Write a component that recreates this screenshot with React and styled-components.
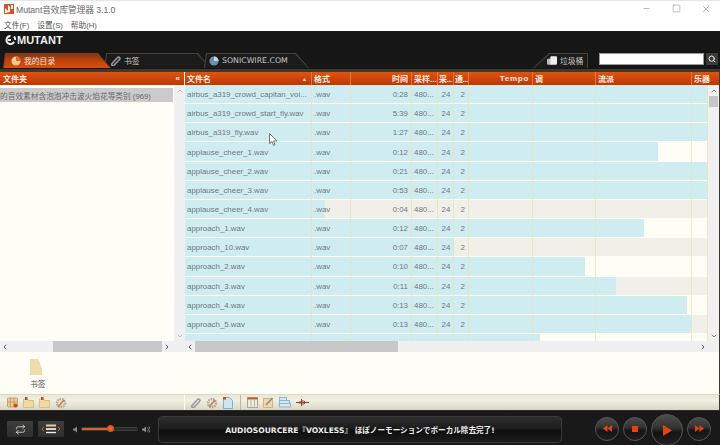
import React from 'react';
import styled, { createGlobalStyle } from 'styled-components';
import { ChevronUp, ChevronDown, ChevronLeft, ChevronRight, Minus, Square, X, Search, Repeat } from 'lucide-react';

const Global = createGlobalStyle`
  html, body { margin: 0; padding: 0; background: #191919; }
  * { box-sizing: border-box; }
`;

const UI = `"DejaVu Sans", "Noto Sans CJK SC", sans-serif`;
const NARROW = `"Liberation Sans", "Noto Sans CJK SC", sans-serif`;
const COLS = '127px 39px 61px 26px 16px 15px 64px 63px 96px 16px';
const HEAD_COLS = '127px 39px 61px 26px 16px 15px 64px 63px 96px 1fr';

const Page = styled.div`
  position: relative;
  width: 720px;
  height: 445px;
  overflow: hidden;
  display: flex;
  flex-direction: column;
  font-family: ${UI};
  background: #fefef6;
`;

const TitleBar = styled.div`
  height: 18px;
  flex: none;
  display: flex;
  align-items: center;
  padding: 0 0 2px 4px;
  gap: 2px;
  background: #fff;
  border-top: 1px solid #e6e6e6;
  color: #666;
`;

const TitleText = styled.span`
  flex: 1;
  font-family: ${NARROW};
  font-size: 8.6px;
`;

const WinButtons = styled.div`
  display: flex;
  margin-right: -1px;
  color: #555;
`;

const WinButton = styled.span`
  width: 30px;
  display: flex;
  justify-content: center;
`;

const MenuBar = styled.div`
  height: 13px;
  flex: none;
  display: flex;
  gap: 8px;
  padding-left: 4px;
  align-items: center;
  background: #fff;
  font-family: ${NARROW};
  font-size: 7.7px;
  color: #555;
`;

const Header = styled.div`
  height: 41px;
  flex: none;
  display: flex;
  flex-direction: column;
  background: #161616;
  border-bottom: 3px solid #3d3a2b;
`;

const Brand = styled.div`
  height: 22px;
  flex: none;
  display: flex;
  align-items: center;
  gap: 1px;
  padding: 0 0 4px 5px;
  color: #eee;
  font-family: "Liberation Sans", sans-serif;
  font-weight: 700;
  font-size: 11px;
`;

const TabStrip = styled.div`
  height: 15px;
  display: flex;
  align-items: stretch;
  padding-left: 3px;
`;

const Tab = styled.div`
  position: relative;
  width: ${p => p.$w}px;
  margin-right: -7px;
  display: flex;
  align-items: center;
  gap: 3px;
  padding-left: ${p => p.$pad}px;
  font-size: 7.8px;
  color: ${p => p.$active ? '#f4e3d6' : '#c8c8c8'};
  z-index: ${p => p.$active ? 2 : 1};
  &::before, &::after {
    content: '';
    position: absolute;
    z-index: -1;
    clip-path: polygon(0 100%, 2px 0, calc(100% - 13px) 0, 100% 100%);
  }
  &::before {
    inset: 0;
    background: ${p => p.$active ? '#8a3a12' : '#44443c'};
  }
  &::after {
    inset: 1px 1px 0;
    background: ${p => p.$active ? 'linear-gradient(#7c3a1a, #c8430a 55%, #d94e0c)' : '#1b1b1b'};
  }
`;

const Spacer = styled.div`
  flex: 1;
`;

const TrashTab = styled.div`
  position: relative;
  width: 55px;
  margin-right: 11px;
  display: flex;
  align-items: center;
  gap: 3px;
  padding-left: 14px;
  font-size: 7.8px;
  white-space: nowrap;
  color: #c8c8c8;
  &::before, &::after {
    content: '';
    position: absolute;
    z-index: 0;
    clip-path: polygon(0 100%, 16px 0, 100% 0, 100% 100%);
  }
  &::before { inset: 0; background: #44443c; }
  &::after { inset: 1px 1px 0 1px; background: #1b1b1b; }
  & > * { position: relative; z-index: 1; }
`;

const SearchBox = styled.div`
  display: flex;
  gap: 2px;
  height: 12px;
  margin: 0 2px 0 0;
`;

const SearchInput = styled.div`
  width: 105px;
  background: #fff;
  border: 1px solid #999;
`;

const SearchButton = styled.div`
  width: 12px;
  background: #3a3a38;
  color: #eee;
  display: flex;
  align-items: center;
  justify-content: center;
`;

const Workspace = styled.div`
  height: 280px;
  flex: none;
  display: grid;
  grid-template-columns: 185px 1fr;
  grid-template-rows: 13px 256px 11px;
  border-right: 1px solid #3d3a2b;
`;

const OrangeHead = styled.div`
  background: linear-gradient(#dd5414, #c93f06 70%, #bd3803);
  color: #fdeee2;
  font-family: ${NARROW};
  font-size: 8px;
  font-weight: 700;
`;

const FolderHead = styled(OrangeHead)`
  display: flex;
  justify-content: space-between;
  align-items: center;
  padding: 0 4px 0 3px;
  margin-right: 1px;
`;

const ListHead = styled(OrangeHead)`
  display: grid;
  grid-template-columns: ${HEAD_COLS};
`;

const HeadCell = styled.div`
  display: flex;
  align-items: center;
  justify-content: ${p => p.$right ? 'flex-end' : 'space-between'};
  padding: 0 ${p => p.$right ? '3px' : '0'} 0 2px;
  border-right: 1px solid #e27a3c;
  overflow: hidden;
  white-space: nowrap;
`;

const ShortCell = styled(HeadCell)`
  padding-left: 1px;
  letter-spacing: -0.5px;
`;

const TempoCell = styled(HeadCell)`
  letter-spacing: 0.7px;
`;

const LastCell = styled(HeadCell)`
  border-right: none;
`;

const SortMark = styled.span`
  font-size: 5px;
  margin-right: 4px;
`;

const FolderBody = styled.div`
  display: flex;
  background: #fefef6;
`;

const FolderList = styled.div`
  flex: 1;
  overflow: hidden;
  padding: 3px 1px 0 0;
`;

const FolderItem = styled.div`
  height: 14px;
  display: flex;
  align-items: center;
  background: #cbcbc9;
  color: #6a6a6a;
  font-family: ${NARROW};
  font-size: 7.7px;
  white-space: nowrap;
  overflow: hidden;
`;

const ListBody = styled.div`
  display: flex;
  overflow: hidden;
`;

const Rows = styled.div`
  width: 523px;
  height: 256px;
  overflow: hidden;
  background: #fefef6;
`;

const Row = styled.div`
  position: relative;
  height: 19.17px;
  display: grid;
  grid-template-columns: ${COLS};
  font-family: "Liberation Sans", sans-serif;
  font-size: 7.9px;
  color: #6f797e;
`;

const Track = styled.div`
  position: absolute;
  inset: 0 0 1px 0;
  background: ${p => p.$odd ? '#fefef6' : '#f1f0e8'};
`;

const Fill = styled.div`
  height: 100%;
  background: #cfecf1;
`;

const Cell = styled.div`
  position: relative;
  display: flex;
  align-items: center;
  justify-content: ${p => p.$align || 'flex-start'};
  padding: 0 ${p => p.$align === 'flex-end' ? '3px' : '1px'} 0 2px;
  border-right: 1px solid rgba(232, 226, 190, 0.75);
  white-space: nowrap;
  overflow: hidden;
`;

const VBar = styled.div`
  width: 11px;
  flex: none;
  display: flex;
  flex-direction: column;
  align-items: center;
  background: #f0f0f0;
  color: #777;
`;

const ArrowBox = styled.div`
  height: 11px;
  flex: none;
  display: flex;
  align-items: center;
  justify-content: center;
`;

const VThumb = styled.div`
  width: 9px;
  height: 11px;
  background: #c6c6c6;
`;

const HBar = styled.div`
  display: flex;
  align-items: stretch;
  background: #f0f0f0;
  color: #555;
`;

const HArrow = styled.div`
  width: 10px;
  flex: none;
  display: flex;
  align-items: center;
  justify-content: center;
  margin-right: ${p => p.$end || 0}px;
`;

const HThumb = styled.div`
  height: 100%;
  width: ${p => p.$w}px;
  margin-left: ${p => p.$at}px;
  background: #c8c8c8;
`;

const Bookmarks = styled.div`
  height: 42px;
  flex: none;
  padding: 7px 0 0 30px;
  background: #fefef6;
  border-right: 1px solid #3d3a2b;
  display: flex;
  flex-direction: column;
  align-items: flex-start;
  font-size: 7.8px;
  color: #555;
  line-height: 10px;
`;

const FolderIcon = styled.div`
  width: 12px;
  height: 16px;
  margin-bottom: 5px;
  background: #eedcaa;
  clip-path: polygon(0 0, 70% 0, 100% 60%, 100% 100%, 0 100%);
`;

const Tools = styled.div`
  height: 16px;
  flex: none;
  display: flex;
  align-items: center;
  background: linear-gradient(#e9e7d6, #f2f0e3 35%, #d9d6c3);
  border-top: 1px solid #dcd9c6;
  border-right: 1px solid #3d3a2b;
`;

const ToolGroup = styled.div`
  width: ${p => p.$w}px;
  height: 100%;
  flex: none;
  display: flex;
  align-items: center;
  gap: ${p => p.$gap || 0}px;
  padding-left: ${p => p.$pad}px;
  border-right: ${p => p.$line ? `1px solid ${p.$line}` : 'none'};
`;

const Player = styled.div`
  height: 35px;
  flex: none;
  display: flex;
  align-items: center;
  padding-left: 7px;
  background: #191919;
  border-top: 1px solid #2d2b22;
`;

const PlayerButton = styled.div`
  width: 26px;
  height: 16px;
  margin: 2px 5px 0 0;
  border-radius: 1px;
  background: linear-gradient(#3e3e3c, #2e2e2c);
  display: flex;
  align-items: center;
  justify-content: center;
  color: #eee;
`;

const Volume = styled.div`
  display: flex;
  align-items: center;
  gap: 4px;
  margin: 2px 0 0 4px;
  color: #777;
`;

const Slider = styled.div`
  position: relative;
  width: 57px;
  height: 4px;
  background: #2c2c2a;
  border: 1px solid #3c3c3a;
  border-radius: 2px;
`;

const SliderFill = styled.div`
  height: 100%;
  background: #d9602a;
`;

const SliderThumb = styled.div`
  position: absolute;
  top: -3px;
  width: 7px;
  height: 7px;
  margin-left: -4px;
  border-radius: 50%;
  background: radial-gradient(#f07030, #c8400a);
`;

const Ticker = styled.div`
  width: 404px;
  height: 27px;
  margin: 2px 0 0 8px;
  flex: none;
  display: flex;
  align-items: center;
  justify-content: center;
  border: 1px solid #3a3a3a;
  border-radius: 4px;
  background: linear-gradient(#2e2e2e, #1c1c1c 45%, #0e0e0e 55%, #1c1c1c);
  color: #eee;
  font-family: "DejaVu Sans", "Noto Sans CJK JP", sans-serif;
  font-size: 7.6px;
  font-weight: 700;
  white-space: nowrap;
`;

const Transport = styled.div`
  display: flex;
  align-items: center;
  gap: 4px;
  margin: 1px 0 0 33px;
`;

const Round = styled.div`
  width: ${p => p.$big ? 32 : 24}px;
  height: ${p => p.$big ? 32 : 24}px;
  margin-bottom: ${p => p.$big ? '-3px' : '0'};
  flex: none;
  border-radius: 50%;
  border: 1px solid #555;
  background: linear-gradient(#4c4c4a, #333331 42%, #141414 58%, #202020);
  display: flex;
  align-items: center;
  justify-content: center;
`;

const Pointer = styled.svg`
  position: absolute;
  left: 269px;
  top: 133px;
`;

const BrandMark = () => (
  <svg width="11" height="10" viewBox="0 0 11 10">
    <path d="M5.5 1a4 4 0 1 0 3.6 5.8M3 5h3M9 1.5A4 4 0 0 1 10 5" fill="none" stroke="#eee" strokeWidth="2" />
  </svg>
);

const AppIcon = () => (
  <svg width="10" height="10" viewBox="0 0 10 10">
    <rect width="10" height="10" fill="#d9532a" />
    <path d="M1 9V4l3 3V1l2 2v5M7 1h2v4H7z" fill="#fff" />
  </svg>
);

const Ball = ({ c1, c2 }) => (
  <svg width="10" height="10" viewBox="0 0 11 11">
    <circle cx="5.5" cy="5.5" r="5" fill={c1} />
    <path d="M5.5 .5a5 5 0 0 1 5 5H5.5z" fill={c2} />
  </svg>
);

const Clip = ({ color = '#999' }) => (
  <svg width="11" height="11" viewBox="0 0 11 11">
    <path d="M2 8.5 7.5 2.5a1.4 1.4 0 0 1 2 2L4 10.2a1 1 0 0 1-2-1.6" fill="none" stroke={color} strokeWidth="1.6" />
  </svg>
);

const Cubes = () => (
  <svg width="10" height="9" viewBox="0 0 12 10">
    <rect x="0" y="3" width="6" height="7" rx="1" fill="#bbb" />
    <rect x="4" y="0" width="8" height="10" rx="1" fill="#eee" />
  </svg>
);

const BoxIcon = () => (
  <svg width="11" height="11" viewBox="0 0 11 11">
    <rect x="0.5" y="1" width="10" height="9" rx="1" fill="#e8cf9d" stroke="#bda57a" />
    <path d="M3.5 1v9M7 1v9M1 5h9" stroke="#d99a5b" />
    <circle cx="8.5" cy="8.5" r="2" fill="#d8481b" />
  </svg>
);

const SmallFolder = ({ mark }) => (
  <svg width="11" height="11" viewBox="0 0 11 11">
    <path d="M.5 2h4l1 1.5h5V10.5H.5z" fill="#eed9a6" stroke="#d8c08c" />
    <rect x="2" y="0" width="2.5" height="3" fill={mark} />
  </svg>
);

const GearPen = () => (
  <svg width="12" height="12" viewBox="0 0 12 12">
    <circle cx="6" cy="6" r="4" fill="none" stroke="#aaa" strokeWidth="2.4" strokeDasharray="1.6 .8" />
    <circle cx="6" cy="6" r="2" fill="#ddd" />
    <path d="M3 10 9 3" stroke="#d87c3c" strokeWidth="1.6" />
  </svg>
);

const Doc = () => (
  <svg width="10" height="12" viewBox="0 0 10 12">
    <path d="M.5.5h6l3 3v8H.5z" fill="#cfe6f2" stroke="#7fb0cf" />
    <rect x="0" y="0" width="3" height="2.5" fill="#d8481b" />
  </svg>
);

const TableIcon = () => (
  <svg width="11" height="11" viewBox="0 0 11 11">
    <rect x="0.5" y="0.5" width="10" height="10" fill="#eeeadb" stroke="#aaa69a" />
    <rect x="0.5" y="0.5" width="10" height="2" fill="#cf5a30" />
    <path d="M4 3v7M7.5 3v7" stroke="#bbb" />
  </svg>
);

const NoteIcon = () => (
  <svg width="11" height="11" viewBox="0 0 11 11">
    <rect x="0.5" y="1.5" width="9" height="9" fill="#efd8a6" stroke="#d0b57e" />
    <path d="M3 8 9.5 1" stroke="#8d8d8d" strokeWidth="1.6" />
  </svg>
);

const LinesIcon = () => (
  <svg width="12" height="11" viewBox="0 0 12 11">
    <rect x="0.5" y="0.5" width="7" height="3" fill="#d5e7f0" stroke="#8db6d0" />
    <rect x="0.5" y="3.5" width="10" height="3" fill="#d5e7f0" stroke="#8db6d0" />
    <rect x="0.5" y="6.5" width="11" height="3.5" fill="#d5e7f0" stroke="#8db6d0" />
  </svg>
);

const WaveIcon = () => (
  <svg width="13" height="9" viewBox="0 0 13 9">
    <path d="M0 4.5h13" stroke="#555" />
    <path d="M4 3v3M5.5 1v7M7 2v5M8.5 3v3" stroke="#b8381a" />
  </svg>
);

const LinesButton = () => (
  <svg width="18" height="10" viewBox="0 0 18 10">
    <path d="M4 1.5h10" stroke="#eec9a6" strokeWidth="2" />
    <path d="M4 5h10" stroke="#d8d4c8" strokeWidth="2" />
    <path d="M4 8.5h10" stroke="#eee" strokeWidth="1.4" />
    <path d="M2 3 0 5l2 2M16 3l2 2-2 2" fill="none" stroke="#a86a46" />
  </svg>
);

const Speaker = ({ loud }) => (
  <svg width={loud ? 8 : 4} height="7" viewBox={loud ? '0 0 8 7' : '0 0 4 7'}>
    <path d="M0 2.5h1.5L4 .5v6L1.5 4.5H0z" fill="#8a8a8a" />
    {loud && <path d="M5.5 1.5a3 3 0 0 1 0 4M7 .5a4.5 4.5 0 0 1 0 6" fill="none" stroke="#8a8a8a" />}
  </svg>
);

const Orange = ({ d, w = 9, h = 7 }) => (
  <svg width={w} height={h} viewBox={`0 0 ${w} ${h}`}>
    <path d={d} fill="#e0460b" />
  </svg>
);

const FILES = [
  ['airbus_a319_crowd_capitan_voi...', '0:28', 100],
  ['airbus_a319_crowd_start_fly.wav', '5:39', 100],
  ['airbus_a319_fly.wav', '1:27', 100],
  ['applause_cheer_1.wav', '0:12', 473],
  ['applause_cheer_2.wav', '0:21', 100],
  ['applause_cheer_3.wav', '0:53', 100],
  ['applause_cheer_4.wav', '0:04', 140],
  ['approach_1.wav', '0:12', 459],
  ['approach_10.wav', '0:07', 269],
  ['approach_2.wav', '0:10', 400],
  ['approach_3.wav', '0:11', 431],
  ['approach_4.wav', '0:13', 502],
  ['approach_5.wav', '0:13', 506],
  ['approach_6.wav', '0:08', 355],
];

export default function App() {
  return (
    <Page>
      <Global />
      <TitleBar>
        <AppIcon />
        <TitleText>Mutant音效库管理器 3.1.0</TitleText>
        <WinButtons>
          <WinButton><Minus size={9} strokeWidth={1} /></WinButton>
          <WinButton><Square size={9} strokeWidth={1} /></WinButton>
          <WinButton><X size={10} strokeWidth={1} /></WinButton>
        </WinButtons>
      </TitleBar>
      <MenuBar>
        <span>文件(F)</span>
        <span>设置(S)</span>
        <span>帮助(H)</span>
      </MenuBar>
      <Header>
        <Brand><BrandMark />MUTANT</Brand>
        <TabStrip>
          <Tab $active $w={108} $pad={8}><Ball c1="#f0c890" c2="#d8702c" />我的目录</Tab>
          <Tab $w={107} $pad={6}><Clip />书签</Tab>
          <Tab $w={105} $pad={5}><Ball c1="#6d8eb0" c2="#c9d4dc" />SONICWIRE.COM</Tab>
          <Spacer />
          <TrashTab><Cubes /><span>垃圾桶</span></TrashTab>
          <SearchBox>
            <SearchInput />
            <SearchButton><Search size={8} strokeWidth={3} /></SearchButton>
          </SearchBox>
        </TabStrip>
      </Header>
      <Workspace>
        <FolderHead><span>文件夹</span><span>«</span></FolderHead>
        <ListHead>
          <HeadCell>文件名<SortMark>▲</SortMark></HeadCell>
          <HeadCell>格式</HeadCell>
          <HeadCell $right>时间</HeadCell>
          <HeadCell>采样...</HeadCell>
          <ShortCell>采...</ShortCell>
          <ShortCell>通...</ShortCell>
          <TempoCell $right>Tempo</TempoCell>
          <HeadCell>调</HeadCell>
          <HeadCell>流派</HeadCell>
          <LastCell>乐器</LastCell>
        </ListHead>
        <FolderBody>
          <FolderList>
            <FolderItem>的音效素材含泡泡冲击波火焰花等类别 (969)</FolderItem>
          </FolderList>
          <VBar>
            <ArrowBox><ChevronUp size={8} strokeWidth={3} color="#bbb" /></ArrowBox>
            <Spacer />
            <ArrowBox><ChevronDown size={8} strokeWidth={3} color="#bbb" /></ArrowBox>
          </VBar>
        </FolderBody>
        <ListBody>
          <Rows>
            {FILES.map(([name, time, width], i) => (
              <Row key={name}>
                <Track $odd={i % 2 === 1}>
                  <Fill style={{ width: width === 100 ? '100%' : width }} />
                </Track>
                <Cell>{name}</Cell>
                <Cell>.wav</Cell>
                <Cell $align="flex-end">{time}</Cell>
                <Cell>480...</Cell>
                <Cell $align="center">24</Cell>
                <Cell $align="flex-end">2</Cell>
                <Cell />
                <Cell />
                <Cell />
                <Cell />
              </Row>
            ))}
          </Rows>
          <VBar>
            <ArrowBox><ChevronUp size={8} strokeWidth={3} /></ArrowBox>
            <VThumb />
            <Spacer />
            <ArrowBox><ChevronDown size={8} strokeWidth={3} /></ArrowBox>
          </VBar>
        </ListBody>
        <HBar>
          <HArrow><ChevronLeft size={8} strokeWidth={3} /></HArrow>
          <HThumb $w={109} $at={43} />
          <HArrow><ChevronRight size={8} strokeWidth={3} /></HArrow>
        </HBar>
        <HBar>
          <HArrow><ChevronLeft size={8} strokeWidth={3} /></HArrow>
          <HThumb $w={203} $at={0} />
          <Spacer />
          <HArrow $end={11}><ChevronRight size={8} strokeWidth={3} /></HArrow>
        </HBar>
      </Workspace>
      <Bookmarks>
        <FolderIcon />
        <span>书签</span>
      </Bookmarks>
      <Tools>
        <ToolGroup $w={185} $pad={7} $gap={5} $line="#fff">
          <BoxIcon />
          <SmallFolder mark="#7a6a44" />
          <SmallFolder mark="#d8481b" />
          <GearPen />
        </ToolGroup>
        <ToolGroup $w={56} $pad={5} $gap={5} $line="#bbb8a6">
          <Clip />
          <GearPen />
          <Doc />
        </ToolGroup>
        <ToolGroup $w={80} $pad={6} $gap={5}>
          <TableIcon />
          <NoteIcon />
          <LinesIcon />
          <WaveIcon />
        </ToolGroup>
      </Tools>
      <Player>
        <PlayerButton><Repeat size={11} strokeWidth={1.6} /></PlayerButton>
        <PlayerButton><LinesButton /></PlayerButton>
        <Volume>
          <Speaker />
          <Slider>
            <SliderFill style={{ width: '52%' }} />
            <SliderThumb style={{ left: '52%' }} />
          </Slider>
          <Speaker loud />
        </Volume>
        <Ticker>AUDIOSOURCERE『VOXLESS』 ほぼノーモーションでボーカル除去完了!</Ticker>
        <Transport>
          <Round><Orange d="M4.5 0v7L0 3.5zM9 0v7L4.5 3.5z" /></Round>
          <Round><Orange d="M0 0h6v6H0z" w={6} h={6} /></Round>
          <Round $big><Orange d="M0 0l9 5.5-9 5.5z" w={9} h={11} /></Round>
          <Round><Orange d="M0 0l4.5 3.5L0 7zM4.5 0 9 3.5 4.5 7z" /></Round>
        </Transport>
      </Player>
      <Pointer width="9" height="13" viewBox="0 0 9 13">
        <path d="M.5.5v10l2.5-2 1.5 4 1.6-.7-1.6-3.8H8z" fill="#fff" stroke="#555" strokeWidth=".8" />
      </Pointer>
    </Page>
  );
}
